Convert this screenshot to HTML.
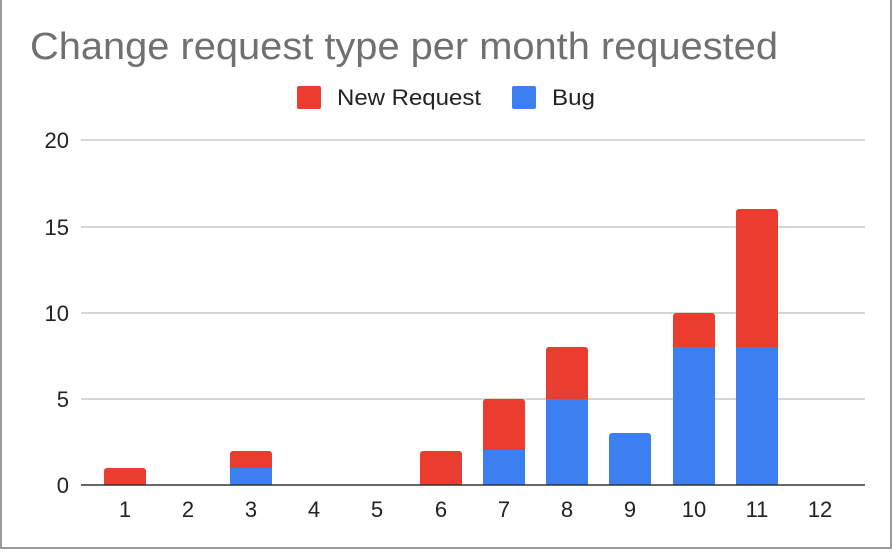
<!DOCTYPE html>
<html><head><style>
body{margin:0;width:892px;height:550px;overflow:hidden;background:#fff;font-family:"Liberation Sans",Arial,sans-serif}
</style></head><body>
<svg width="892" height="550" xmlns="http://www.w3.org/2000/svg" font-family="Liberation Sans, Arial, sans-serif">
<rect x="1" y="-2" width="890" height="550" fill="none" stroke="#9a9a9a" stroke-width="2"/>
<text x="30" y="59" font-size="38" fill="#707070" textLength="748" lengthAdjust="spacingAndGlyphs">Change request type per month requested</text>
<rect x="297" y="86" width="24" height="23" rx="2" fill="#ea3c2f"/>
<text x="337" y="105" font-size="22" fill="#222" textLength="144" lengthAdjust="spacingAndGlyphs">New Request</text>
<rect x="512" y="86" width="24" height="23" rx="2" fill="#3b7ff0"/>
<text x="552" y="105" font-size="22" fill="#222" textLength="43" lengthAdjust="spacingAndGlyphs">Bug</text>
<g stroke="#c8c8c8" stroke-width="1.5">
<line x1="81" y1="140" x2="865" y2="140"/>
<line x1="81" y1="227" x2="865" y2="227"/>
<line x1="81" y1="313" x2="865" y2="313"/>
<line x1="81" y1="399" x2="865" y2="399"/>
</g>
<g font-size="22" fill="#222" text-anchor="end">
<text x="69" y="148">20</text><text x="69" y="235">15</text><text x="69" y="321">10</text><text x="69" y="407">5</text><text x="69" y="493">0</text>
</g>
<g fill="#ea3c2f">
<path d="M104 485V471a3 3 0 0 1 3-3h36a3 3 0 0 1 3 3V485z"/>
<path d="M230 485V454a3 3 0 0 1 3-3h36a3 3 0 0 1 3 3V485z"/>
<path d="M420 485V454a3 3 0 0 1 3-3h36a3 3 0 0 1 3 3V485z"/>
<path d="M483 485V402a3 3 0 0 1 3-3h36a3 3 0 0 1 3 3V485z"/>
<path d="M546 485V350a3 3 0 0 1 3-3h36a3 3 0 0 1 3 3V485z"/>
<path d="M673 485V316a3 3 0 0 1 3-3h36a3 3 0 0 1 3 3V485z"/>
<path d="M736 485V212a3 3 0 0 1 3-3h36a3 3 0 0 1 3 3V485z"/>
</g>
<g fill="#3b7ff0">
<rect x="230" y="468" width="42" height="17"/>
<rect x="483" y="450" width="42" height="35"/>
<rect x="546" y="399" width="42" height="86"/>
<path d="M609 485V436a3 3 0 0 1 3-3h36a3 3 0 0 1 3 3V485z"/>
<rect x="673" y="347" width="42" height="138"/>
<rect x="736" y="347" width="42" height="138"/>
</g>
<line x1="81" y1="485" x2="865" y2="485" stroke="#333" stroke-width="1.5"/>
<g font-size="22" fill="#222" text-anchor="middle">
<text x="125" y="517">1</text><text x="188" y="517">2</text><text x="251" y="517">3</text><text x="314" y="517">4</text><text x="377" y="517">5</text><text x="441" y="517">6</text><text x="504" y="517">7</text><text x="567" y="517">8</text><text x="630" y="517">9</text><text x="694" y="517">10</text><text x="757" y="517">11</text><text x="820" y="517">12</text>
</g>
</svg>
</body></html>
